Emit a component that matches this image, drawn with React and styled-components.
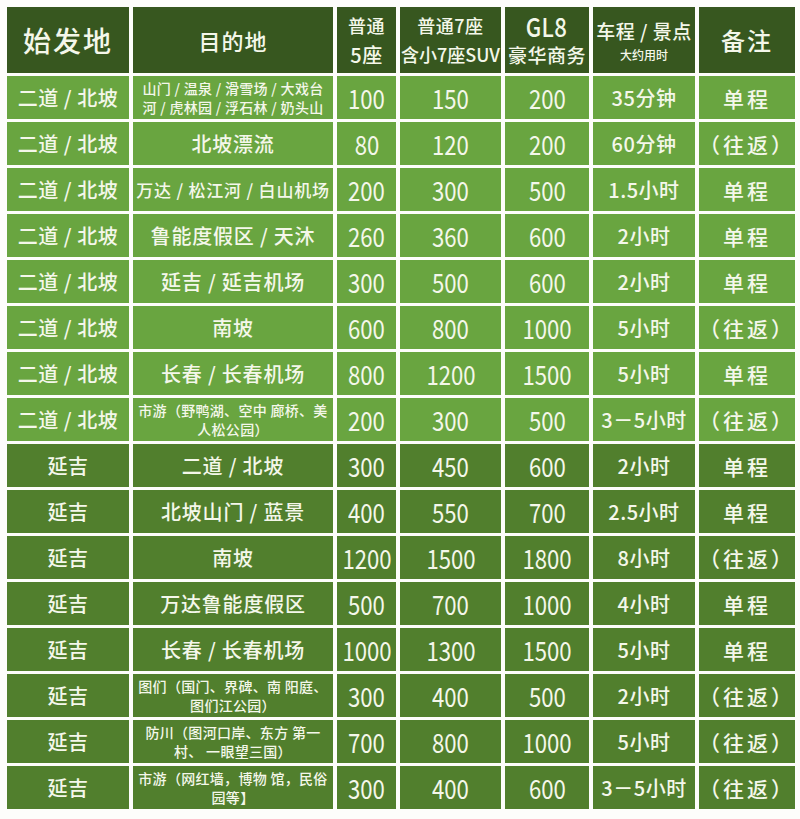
import React from "react";
import styled, { createGlobalStyle } from "styled-components";

const GlobalStyle = createGlobalStyle`
  html, body {
    margin: 0;
    padding: 0;
    background: #ffffff;
  }
  body {
    font-family: "Noto Sans CJK SC", "Noto Sans", sans-serif;
  }
`;

const Page = styled.div`
  width: 800px;
  height: 819px;
  padding: 7px 0 0 7px;
  box-sizing: border-box;
  background: #fdfdfb;
`;

const Grid = styled.div`
  display: grid;
  grid-template-columns: 122px 200px 59px 101px 84px 102px 96px;
  grid-template-rows: 66px repeat(16, 43px);
  column-gap: 4px;
  row-gap: 3px;
`;

const tones = {
  head: "#37571f",
  light: "#69a540",
  dark: "#517f2d",
};

const Cell = styled.div`
  display: flex;
  flex-direction: column;
  align-items: center;
  justify-content: center;
  text-align: center;
  background: ${(p) => tones[p.$tone]};
  color: #f4f7ea;
  overflow: hidden;
  white-space: nowrap;
`;

/* narrow latin glyphs, like the condensed face of the original */
const Narrow = styled.span`
  display: inline-block;
  transform: scaleX(${(p) => p.$scale || 0.82});
  transform-origin: center;
`;

const HeadBig = styled.span`
  font-size: ${(p) => p.$size || 22}px;
  font-weight: 500;
  letter-spacing: ${(p) => p.$spacing || 1}px;
  line-height: 1;
`;

const HeadLine = styled.span`
  font-size: ${(p) => p.$size || 18}px;
  font-weight: 500;
  line-height: ${(p) => p.$lh || 29}px;
  letter-spacing: ${(p) => p.$spacing ?? 0.5}px;
`;

const SmallNote = styled.span`
  font-size: 12px;
  font-weight: 500;
  line-height: 16px;
  margin-top: 2px;
`;

const Place = styled.span`
  font-size: 20px;
  font-weight: 500;
  letter-spacing: 0.5px;
`;

const Dest = styled.span`
  font-size: ${(p) => p.$size || 20}px;
  font-weight: 500;
  letter-spacing: 0.8px;
`;

const DestSmall = styled.span`
  font-size: 14px;
  font-weight: 500;
  line-height: 19px;
  letter-spacing: 0.3px;
  white-space: pre;
`;

const Num = styled(Narrow)`
  font-size: 27px;
  font-weight: 400;
`;

const Time = styled.span`
  font-size: 20px;
  font-weight: 500;
  letter-spacing: 0.5px;
`;

const Note = styled.span`
  font-size: 21px;
  font-weight: 500;
  letter-spacing: 3px;
`;

const rows = [
  ["二道 / 北坡", "山门 / 温泉 / 滑雪场 / 大戏台\n河 / 虎林园 / 浮石林 / 奶头山", "100", "150", "200", "35分钟", "单程"],
  ["二道 / 北坡", "北坡漂流", "80", "120", "200", "60分钟", "（往返）"],
  ["二道 / 北坡", "万达 / 松江河 / 白山机场", "200", "300", "500", "1.5小时", "单程", 17],
  ["二道 / 北坡", "鲁能度假区 / 天沐", "260", "360", "600", "2小时", "单程"],
  ["二道 / 北坡", "延吉 / 延吉机场", "300", "500", "600", "2小时", "单程"],
  ["二道 / 北坡", "南坡", "600", "800", "1000", "5小时", "（往返）"],
  ["二道 / 北坡", "长春 / 长春机场", "800", "1200", "1500", "5小时", "单程"],
  ["二道 / 北坡", "市游（野鸭湖、空中 廊桥、美\n人松公园）", "200", "300", "500", "3－5小时", "（往返）"],
  ["延吉", "二道 / 北坡", "300", "450", "600", "2小时", "单程"],
  ["延吉", "北坡山门 / 蓝景", "400", "550", "700", "2.5小时", "单程"],
  ["延吉", "南坡", "1200", "1500", "1800", "8小时", "（往返）"],
  ["延吉", "万达鲁能度假区", "500", "700", "1000", "4小时", "单程"],
  ["延吉", "长春 / 长春机场", "1000", "1300", "1500", "5小时", "单程"],
  ["延吉", "图们（国门、界碑、南 阳庭、\n图们江公园）", "300", "400", "500", "2小时", "（往返）"],
  ["延吉", "防川（图河口岸、东方 第一\n村、 一眼望三国）", "700", "800", "1000", "5小时", "（往返）"],
  ["延吉", "市游（网红墙，博物 馆，民俗\n园等】", "300", "400", "600", "3－5小时", "（往返）"],
];

const App = () => {
  return (
    <Page>
      <GlobalStyle />
      <Grid>
        <Cell $tone="head">
          <HeadBig $size={28} $spacing={2}>始发地</HeadBig>
        </Cell>
        <Cell $tone="head">
          <HeadBig $size={22} $spacing={1}>目的地</HeadBig>
        </Cell>
        <Cell $tone="head">
          <HeadLine $size={18}>普通</HeadLine>
          <HeadLine $size={20}>5座</HeadLine>
        </Cell>
        <Cell $tone="head">
          <HeadLine $size={18}>普通7座</HeadLine>
          <HeadLine $size={18} $spacing={0}>含小7座SUV</HeadLine>
        </Cell>
        <Cell $tone="head">
          <HeadLine $size={26}>
            <Narrow $scale={0.85}>GL8</Narrow>
          </HeadLine>
          <HeadLine $size={19}>豪华商务</HeadLine>
        </Cell>
        <Cell $tone="head">
          <HeadLine $size={19} $lh={28} $spacing={0.5}>车程 / 景点</HeadLine>
          <SmallNote>大约用时</SmallNote>
        </Cell>
        <Cell $tone="head">
          <HeadBig $size={24} $spacing={2}>备注</HeadBig>
        </Cell>

        {rows.map((r, i) => {
          const tone = i < 8 ? "light" : "dark";
          const multi = r[1].includes("\n");
          return (
            <React.Fragment key={i}>
              <Cell $tone={tone}>
                <Place>{r[0]}</Place>
              </Cell>
              <Cell $tone={tone}>
                {multi ? (
                  <DestSmall>{r[1]}</DestSmall>
                ) : (
                  <Dest $size={r[7]}>{r[1]}</Dest>
                )}
              </Cell>
              <Cell $tone={tone}>
                <Num>{r[2]}</Num>
              </Cell>
              <Cell $tone={tone}>
                <Num>{r[3]}</Num>
              </Cell>
              <Cell $tone={tone}>
                <Num>{r[4]}</Num>
              </Cell>
              <Cell $tone={tone}>
                <Time>{r[5]}</Time>
              </Cell>
              <Cell $tone={tone}>
                <Note>{r[6]}</Note>
              </Cell>
            </React.Fragment>
          );
        })}
      </Grid>
    </Page>
  );
};

export default App;
